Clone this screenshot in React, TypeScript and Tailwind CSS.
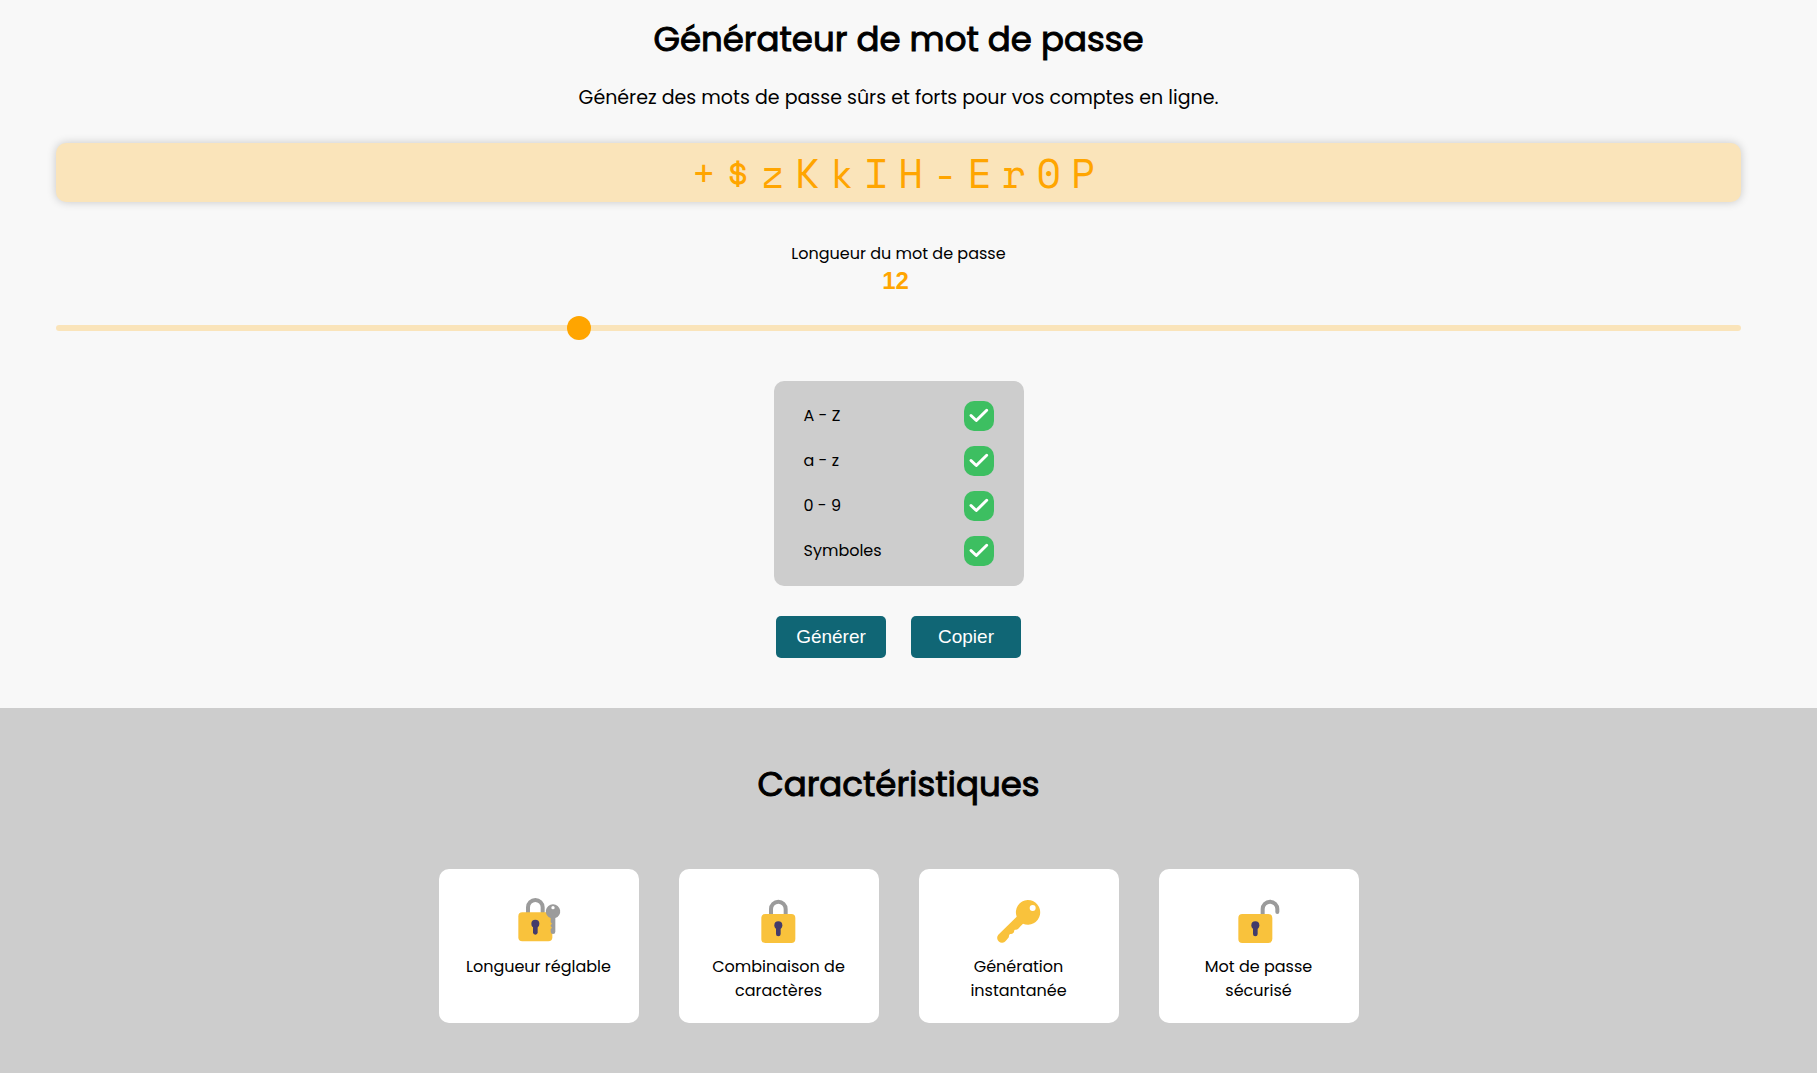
import { useState } from "react";

const SETS = [
  { id: "upper", label: "A - Z", chars: "ABCDEFGHIJKLMNOPQRSTUVWXYZ" },
  { id: "lower", label: "a - z", chars: "abcdefghijklmnopqrstuvwxyz" },
  { id: "digits", label: "0 - 9", chars: "0123456789" },
  { id: "symbols", label: "Symboles", chars: "+$-!?@#%&*_=" },
];

function Body({ x, y }: { x: number; y: number }) {
  return (
    <g transform={`translate(${x} ${y})`}>
      <rect width="102" height="87" rx="12" fill="#f9c23c" />
      <circle cx="51" cy="34" r="12" fill="#433b6b" />
      <path d="M51 36v24" stroke="#433b6b" strokeWidth="14" strokeLinecap="round" />
    </g>
  );
}

function Icon({ kind }: { kind: string }) {
  return (
    <svg viewBox="0 0 150 150" className="size-[50px]" fill="none" aria-hidden="true">
      {kind === "lockKey" && (
        <>
          <path d="M42 62V43a22 22 0 0 1 44 0v19" stroke="#9b9b9b" strokeWidth="12" />
          <Body x={13} y={58} />
          <path fillRule="evenodd" fill="#9b9b9b" d="M117 34a21 21 0 0 1 7 41v41a7 7 0 0 1-14 0v-8l4-4-4-4v-4l4-4-4-4V75a21 21 0 0 1 7-41Zm0 5a5 5 0 1 0 0 10 5 5 0 0 0 0-10Z" />
        </>
      )}
      {kind === "lock" && (
        <>
          <path d="M51 67V48a22 22 0 0 1 44 0v19" stroke="#9b9b9b" strokeWidth="12" />
          <Body x={22} y={63} />
        </>
      )}
      {kind === "key" && (
        <path fillRule="evenodd" fill="#f9c23c" d="M101 21a37 37 0 1 1-14 71l-9 9c-4 5-8 9-12 9-3 0-4 0-5 2-1 4-1 7-4 9-3 3-9 1-11 4s0 7-4 11l-7 8a14 14 0 0 1-22-19l55-54A37 37 0 0 1 101 21Zm15 15a9 9 0 1 0 0 18 9 9 0 0 0 0-18Z" />
      )}
      {kind === "open" && (
        <>
          <path d="M86 67V48a22 22 0 0 1 44 0v9" stroke="#9b9b9b" strokeWidth="12" strokeLinecap="round" />
          <Body x={13} y={63} />
        </>
      )}
    </svg>
  );
}

const FEATURES = [
  { icon: "lockKey", text: "Longueur réglable" },
  { icon: "lock", text: "Combinaison de caractères" },
  { icon: "key", text: "Génération instantanée" },
  { icon: "open", text: "Mot de passe sécurisé" },
];

export default function App() {
  const [length, setLength] = useState(12);
  const [password, setPassword] = useState("+$zKkIH-Er0P");
  const [enabled, setEnabled] = useState<Record<string, boolean>>({
    upper: true,
    lower: true,
    digits: true,
    symbols: true,
  });

  const generate = () => {
    const pool = SETS.filter((s) => enabled[s.id]).map((s) => s.chars).join("");
    if (!pool) return;
    setPassword(Array.from({ length }, () => pool[Math.floor(Math.random() * pool.length)]).join(""));
  };

  return (
    <div className="flex min-h-screen flex-col bg-[#f8f8f8] font-[Poppins,Inter,sans-serif] text-base text-black">
      <main className="flex flex-col items-center pr-[76px] pb-[50px] pl-14 pt-3">
        <h1 className="text-[34px] leading-[54px] font-normal [-webkit-text-stroke:1px_black]">Générateur de mot de passe</h1>
        <p className="mt-[17px] text-[19px] leading-[30px]">Générez des mots de passe sûrs et forts pour vos comptes en ligne.</p>
        <input
          aria-label="Mot de passe"
          readOnly
          value={password}
          className="mt-[30px] h-[59px] w-full rounded-[10px] bg-[#fae4ba] text-center font-['Space_Mono','Liberation_Mono',monospace] text-[40px] tracking-[10px] text-[#ffa500] shadow-[0_0_10px_rgba(0,0,0,0.2)] outline-none"
        />
        <label htmlFor="length" className="mt-10 leading-6">Longueur du mot de passe</label>
        <output htmlFor="length" className="pr-1.5 font-['Liberation_Sans',Arial,sans-serif] text-2xl leading-[30px] font-bold text-[#ffa500]">
          {length}
        </output>
        <input
          id="length"
          type="range"
          min={4}
          max={30}
          value={length}
          onChange={(e) => setLength(Number(e.target.value))}
          className="mt-[29px] h-1.5 w-full appearance-none rounded-[5px] bg-[#fae4ba] [&::-webkit-slider-thumb]:size-6 [&::-webkit-slider-thumb]:appearance-none [&::-webkit-slider-thumb]:rounded-full [&::-webkit-slider-thumb]:bg-[#ffa500]"
        />
        <div className="mt-[50px] flex w-[250px] flex-col gap-[15px] rounded-[10px] bg-[#cdcdcd] px-[30px] py-5">
          {SETS.map((s) => (
            <label key={s.id} className="flex h-[30px] items-center justify-between">
              <span>{s.label}</span>
              <span className="grid size-[30px]">
                <input
                  type="checkbox"
                  checked={enabled[s.id]}
                  onChange={(e) => setEnabled({ ...enabled, [s.id]: e.target.checked })}
                  className="peer col-start-1 row-start-1 size-[30px] appearance-none rounded-[10px] bg-white checked:bg-[#3dbf61]"
                />
                <svg viewBox="0 0 30 30" fill="none" className="pointer-events-none invisible col-start-1 row-start-1 size-[30px] peer-checked:visible" aria-hidden="true">
                  <path d="M7 14.5L12.3 19.5L22.7 9.3" stroke="white" strokeWidth="3" strokeLinecap="round" strokeLinejoin="round" />
                </svg>
              </span>
            </label>
          ))}
        </div>
        <div className="mt-[30px] flex gap-[25px] font-['Liberation_Sans',Arial,sans-serif] text-[19px] text-white">
          <button type="button" onClick={generate} className="h-[42px] w-[110px] rounded-[5px] bg-[#106675]">Générer</button>
          <button type="button" onClick={() => navigator.clipboard?.writeText(password)} className="h-[42px] w-[110px] rounded-[5px] bg-[#106675]">Copier</button>
        </div>
      </main>
      <section className="flex grow flex-col items-center bg-[#cdcdcd] pt-[49px] pr-5 pb-[50px]">
        <h2 className="text-[34px] leading-[54px] font-normal [-webkit-text-stroke:1px_black]">Caractéristiques</h2>
        <ul className="mt-[58px] flex flex-wrap justify-center gap-10">
          {FEATURES.map((f) => (
            <li key={f.icon} className="flex w-[200px] flex-col items-center rounded-[10px] bg-white px-5 pt-6 pb-5 text-center leading-6">
              <Icon kind={f.icon} />
              <p className="mt-3">{f.text}</p>
            </li>
          ))}
        </ul>
      </section>
    </div>
  );
}
